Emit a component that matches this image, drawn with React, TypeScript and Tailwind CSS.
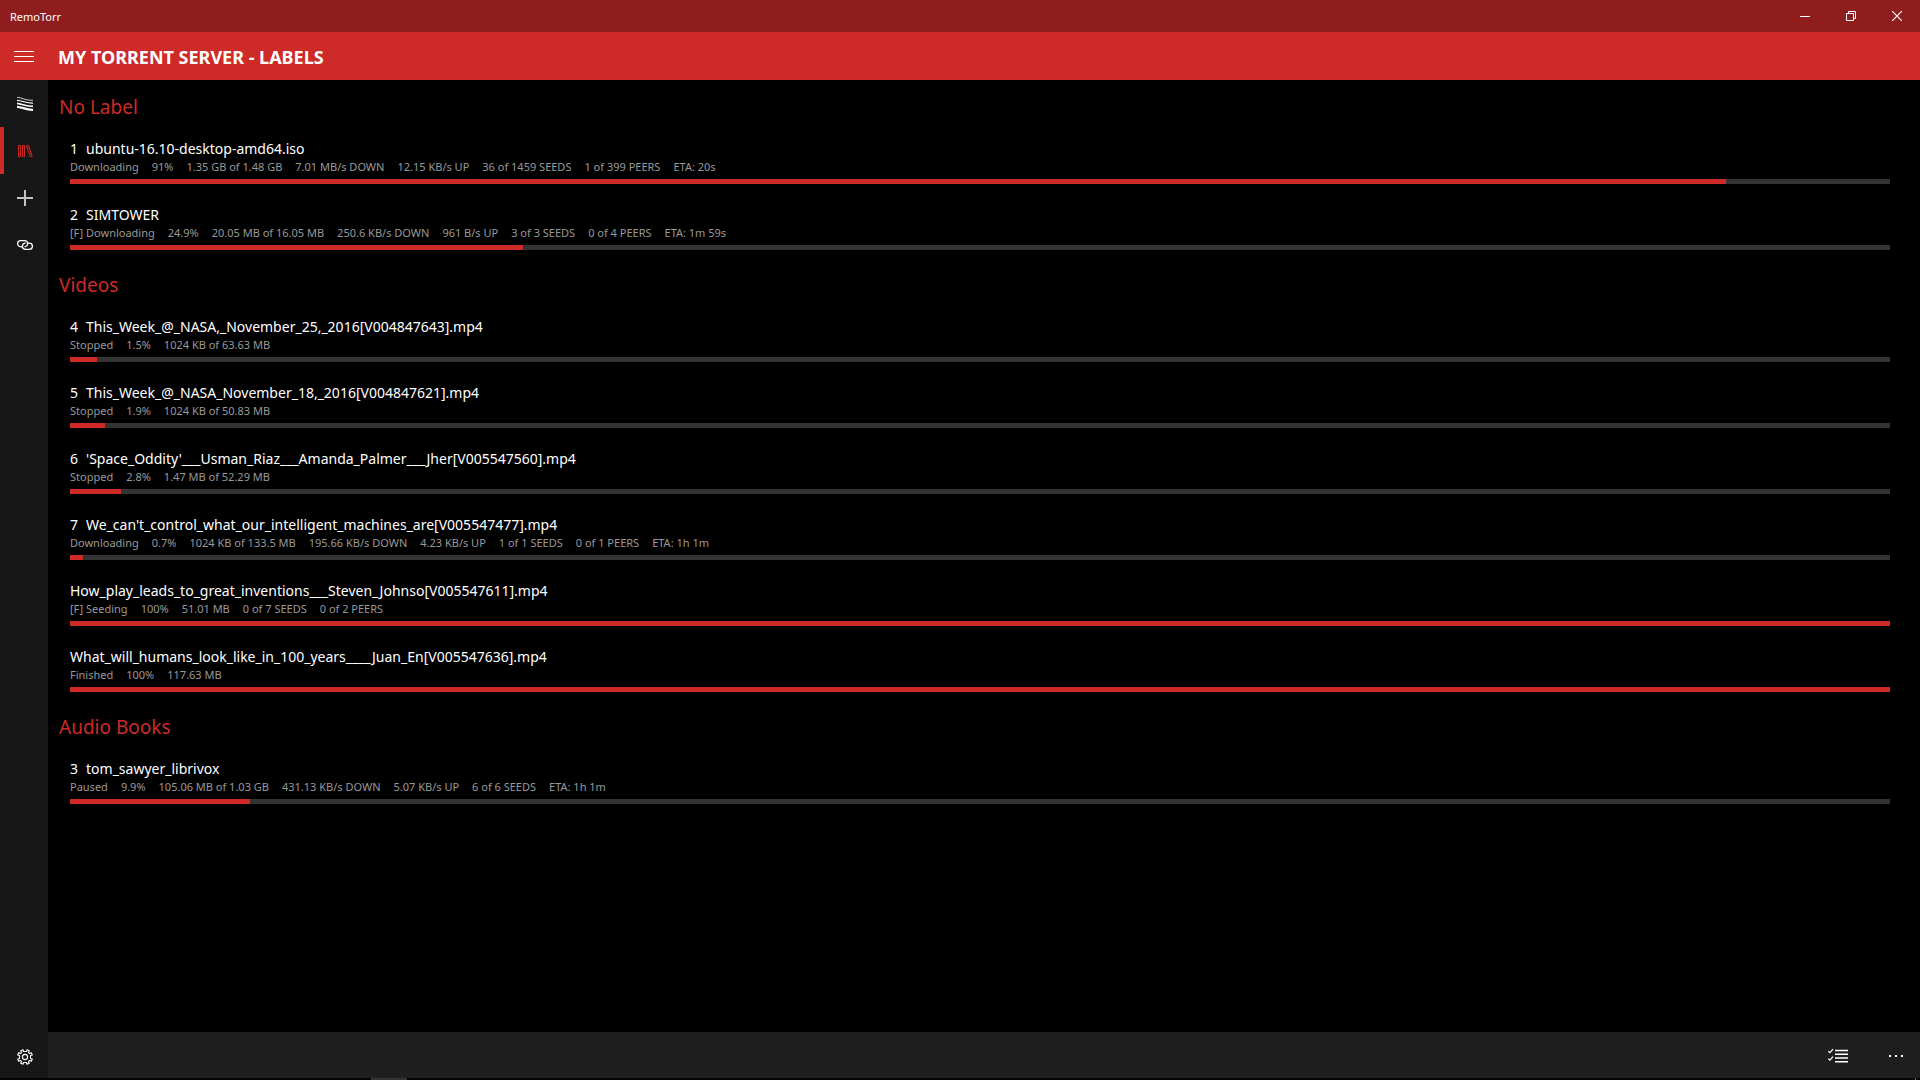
import React from 'react';

interface Torrent {
    position?: number;
    name: string;
    percent: number;
    stats: string[];
}

interface LabelGroup {
    label: string;
    torrents: Torrent[];
}

const groups: LabelGroup[] = [
    {
        label: 'No Label',
        torrents: [
            {
                position: 1,
                name: 'ubuntu-16.10-desktop-amd64.iso',
                percent: 91,
                stats: ['Downloading', '91%', '1.35 GB of 1.48 GB', '7.01 MB/s DOWN', '12.15 KB/s UP', '36 of 1459 SEEDS', '1 of 399 PEERS', 'ETA: 20s'],
            },
            {
                position: 2,
                name: 'SIMTOWER',
                percent: 24.9,
                stats: ['[F] Downloading', '24.9%', '20.05 MB of 16.05 MB', '250.6 KB/s DOWN', '961 B/s UP', '3 of 3 SEEDS', '0 of 4 PEERS', 'ETA: 1m 59s'],
            },
        ],
    },
    {
        label: 'Videos',
        torrents: [
            {
                position: 4,
                name: 'This_Week_@_NASA,_November_25,_2016[V004847643].mp4',
                percent: 1.5,
                stats: ['Stopped', '1.5%', '1024 KB of 63.63 MB'],
            },
            {
                position: 5,
                name: 'This_Week_@_NASA_November_18,_2016[V004847621].mp4',
                percent: 1.9,
                stats: ['Stopped', '1.9%', '1024 KB of 50.83 MB'],
            },
            {
                position: 6,
                name: "'Space_Oddity'___Usman_Riaz___Amanda_Palmer___Jher[V005547560].mp4",
                percent: 2.8,
                stats: ['Stopped', '2.8%', '1.47 MB of 52.29 MB'],
            },
            {
                position: 7,
                name: "We_can't_control_what_our_intelligent_machines_are[V005547477].mp4",
                percent: 0.7,
                stats: ['Downloading', '0.7%', '1024 KB of 133.5 MB', '195.66 KB/s DOWN', '4.23 KB/s UP', '1 of 1 SEEDS', '0 of 1 PEERS', 'ETA: 1h 1m'],
            },
            {
                name: 'How_play_leads_to_great_inventions___Steven_Johnso[V005547611].mp4',
                percent: 100,
                stats: ['[F] Seeding', '100%', '51.01 MB', '0 of 7 SEEDS', '0 of 2 PEERS'],
            },
            {
                name: 'What_will_humans_look_like_in_100_years____Juan_En[V005547636].mp4',
                percent: 100,
                stats: ['Finished', '100%', '117.63 MB'],
            },
        ],
    },
    {
        label: 'Audio Books',
        torrents: [
            {
                position: 3,
                name: 'tom_sawyer_librivox',
                percent: 9.9,
                stats: ['Paused', '9.9%', '105.06 MB of 1.03 GB', '431.13 KB/s DOWN', '5.07 KB/s UP', '6 of 6 SEEDS', 'ETA: 1h 1m'],
            },
        ],
    },
];

const MinimizeIcon = () => (
    <svg width="10" height="10" viewBox="0 0 10 10" fill="none" stroke="currentColor">
        <path d="M0 5.5h10" />
    </svg>
);

const RestoreIcon = () => (
    <svg width="10" height="10" viewBox="0 0 10 10" fill="none" stroke="currentColor">
        <path d="M.5 2.5h7v7h-7zM2.5 2.5v-2h7v7h-2" />
    </svg>
);

const CloseIcon = () => (
    <svg width="10" height="10" viewBox="0 0 10 10" fill="none" stroke="currentColor" strokeWidth="1.2">
        <path d="M0 0l10 10M10 0L0 10" />
    </svg>
);

const MenuIcon = () => (
    <svg width="20" height="12" viewBox="0 0 20 12" fill="none" stroke="currentColor">
        <path d="M0 .5h20M0 5.5h20M0 10.5h20" />
    </svg>
);

const StreamsIcon = () => (
    <svg width="16" height="16" viewBox="0 0 16 16" fill="none" stroke="currentColor">
        <path d="M0 1.3C5 1.6 8 4.5 16 4.3" strokeWidth="0.8" />
        <path d="M0 4.3C5 4.6 9 7.3 16 7.1" strokeWidth="1.2" />
        <path d="M0 7.4C5 7.7 9 10.5 16 10.3" strokeWidth="1.6" />
        <path d="M0 10.8C5 11 9 14 16 13.8" strokeWidth="2.2" />
    </svg>
);

const LibraryIcon = () => (
    <svg width="16" height="16" viewBox="0 0 16 16" fill="none" stroke="currentColor">
        <path d="M1.5 2.5h2v11h-2zM5.5 2.5h2v11h-2z" />
        <path d="M9.4 2.8l2-.5 3.8 10.8-2 .6zM10.4 5.4l2-.6M12.4 11l2-.6" />
    </svg>
);

const AddIcon = () => (
    <svg width="16" height="16" viewBox="0 0 16 16" fill="none" stroke="#c4c4c4" strokeWidth="2">
        <path d="M0 8h16M8 0v16" />
    </svg>
);

const LinkIcon = () => (
    <svg width="16" height="16" viewBox="0 0 16 16" fill="none" stroke="currentColor" strokeWidth="1.3">
        <path d="M5 9.8H3.7a3.1 3.1 0 0 1 0-6.2h3.8a3.1 3.1 0 0 1 0 6.2" />
        <path d="M11 6.2h1.3a3.1 3.1 0 0 1 0 6.2H8.5a3.1 3.1 0 0 1 0-6.2" />
    </svg>
);

const SettingsIcon = () => (
    <svg width="16" height="16" viewBox="0 0 16 16" fill="none" stroke="currentColor" strokeWidth="1.1" strokeLinejoin="round">
        <circle cx="8" cy="8" r="2.6" />
        <path d="M6.5 2.5L6 .7 3.7 1.7l.9 1.7-1.2 1.2-1.7-.9L.7 6l1.8.5v3L.7 10l1 2.3 1.7-.9 1.2 1.2-.9 1.7 2.3 1 .5-1.8h3l.5 1.8 2.3-1-.9-1.7 1.2-1.2 1.7.9 1-2.3-1.8-.5v-3l1.8-.5-1-2.3-1.7.9-1.2-1.2.9-1.7L10 .7l-.5 1.8z" />
    </svg>
);

const SelectIcon = () => (
    <svg width="20" height="16" viewBox="0 0 20 16" fill="none" stroke="currentColor">
        <path d="M.3 3.2l1.6 1.5L5 1.2M.3 10.7l1.6 1.5L5 8.7" strokeWidth="1.2" />
        <path d="M7 2.5h13M7 6.2h13M7 9.9h13M7 13.7h13" strokeWidth="1.5" />
    </svg>
);

const MoreIcon = () => (
    <svg width="14" height="2" viewBox="0 0 14 2" fill="currentColor">
        <path d="M0 0h2v2H0zM6 0h2v2H6zM12 0h2v2h-2z" />
    </svg>
);

const navItems = [
    { label: 'Torrents', icon: StreamsIcon },
    { label: 'Labels', icon: LibraryIcon, active: true },
    { label: 'Add torrent', icon: AddIcon },
    { label: 'Add link', icon: LinkIcon },
];

const windowButtons = [
    { label: 'Minimize', icon: MinimizeIcon },
    { label: 'Restore', icon: RestoreIcon },
    { label: 'Close', icon: CloseIcon },
];

const TorrentRow = ({ torrent }: { torrent: Torrent }) => (
    <li className="h-[66px] pt-[9px]">
        <div className="flex gap-2 text-sm leading-5 text-white whitespace-nowrap">
            {torrent.position && <span>{torrent.position}</span>}
            <span>{torrent.name}</span>
        </div>
        <div className="flex gap-[13px] text-[11px] leading-4 text-[#999999] whitespace-nowrap">
            {torrent.stats.map((stat) => (
                <span key={stat}>{stat}</span>
            ))}
        </div>
        <div
            role="progressbar"
            aria-label={torrent.name}
            aria-valuenow={torrent.percent}
            className="mt-1 h-[5px] bg-[#333333]"
        >
            <div className="h-full bg-[#cd2a28]" style={{ width: `${torrent.percent}%` }} />
        </div>
    </li>
);

const App = () => {
    return (
        <div className="flex h-screen flex-col overflow-hidden bg-black font-['Noto_Sans','Open_Sans',sans-serif] text-white">
            {/* Title bar */}
            <div className="flex h-8 shrink-0 items-center justify-between bg-[#8f1d1d]">
                <span className="pt-[2px] pl-[10px] text-[11px] leading-4">RemoTorr</span>
                <div className="flex h-full">
                    {windowButtons.map(({ label, icon: Icon }) => (
                        <button key={label} aria-label={label} className="flex w-[46px] items-center justify-center">
                            <Icon />
                        </button>
                    ))}
                </div>
            </div>

            {/* Page header */}
            <header className="flex h-12 shrink-0 items-center bg-[#cd2a28]">
                <button aria-label="Menu" className="flex h-12 w-12 items-center justify-center pt-[2px]">
                    <MenuIcon />
                </button>
                <h1 className="pt-[2px] pl-[10px] text-lg leading-6 font-bold">MY TORRENT SERVER - LABELS</h1>
            </header>

            <div className="flex min-h-0 flex-1">
                {/* Sidebar */}
                <nav className="flex w-12 shrink-0 flex-col bg-[#171717]">
                    {navItems.map(({ label, icon: Icon, active }) => (
                        <button
                            key={label}
                            aria-label={label}
                            className={`flex h-[47px] items-center justify-center border-l-4 pr-[2px] ${
                                active ? 'border-[#cd2a28] text-[#cd2a28]' : 'border-transparent'
                            }`}
                        >
                            <Icon />
                        </button>
                    ))}
                    <button aria-label="Settings" className="mt-auto flex h-[42px] items-center justify-center pl-[2px]">
                        <SettingsIcon />
                    </button>
                </nav>

                <div className="flex min-w-0 flex-1 flex-col">
                    <main className="min-h-0 flex-1 overflow-hidden pt-1 pr-[30px] pl-[11px]">
                        {groups.map((group) => (
                            <section key={group.label}>
                                <h2 className="h-[46px] text-[19px] leading-[46px] text-[#cd2a28]">{group.label}</h2>
                                <ul className="pl-[11px]">
                                    {group.torrents.map((torrent) => (
                                        <TorrentRow key={torrent.name} torrent={torrent} />
                                    ))}
                                </ul>
                            </section>
                        ))}
                    </main>

                    {/* Command bar */}
                    <div className="flex h-[46px] shrink-0 justify-end bg-[#1f1f1f] pt-[2px]">
                        <button aria-label="Select" className="flex w-[68px] items-center justify-center">
                            <SelectIcon />
                        </button>
                        <button aria-label="More" className="flex w-12 items-center justify-center pb-px">
                            <MoreIcon />
                        </button>
                    </div>
                </div>
            </div>

            {/* Taskbar edge */}
            <div className="flex h-[2px] shrink-0 justify-between bg-[#040404] pr-1 pl-[371px]">
                <div className="w-9 bg-[#333333]" />
                <div className="w-px bg-[#666666]" />
            </div>
        </div>
    );
};

export default App;
